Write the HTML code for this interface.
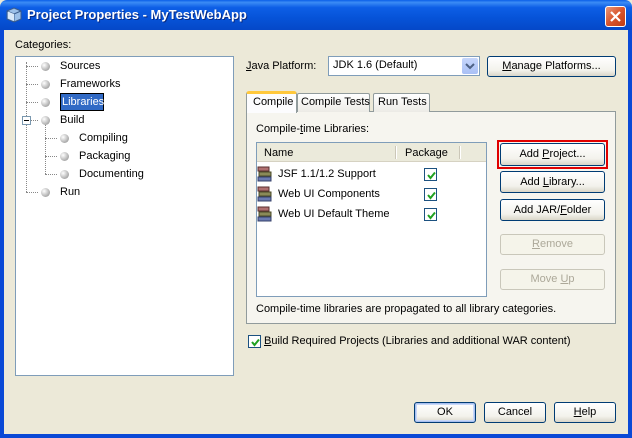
<!DOCTYPE html>
<html><head><meta charset="utf-8"><style>
*{box-sizing:border-box;margin:0;padding:0}
body{width:632px;height:438px;overflow:hidden;font-family:"Liberation Sans",Tahoma,sans-serif;font-size:11px;line-height:15px;color:#000;background:#ece9d8;position:relative}
.a{position:absolute;white-space:nowrap}
.title{left:0;top:0;width:632px;height:30px;background:linear-gradient(#0a5fe8 0%,#3b8cf5 8%,#0d5ee6 25%,#0653d8 60%,#0548c8 100%);border-radius:7px 7px 0 0}
.bl{background:#0a49d6}
.btn{position:absolute;border:1px solid #003c74;border-radius:3px;background:linear-gradient(#fff,#f3f2ec 70%,#d9d6c8);text-align:center;line-height:19px}
.btn.dis{border-color:#c9c7ba;color:#aca899;background:#f5f4ea}
u{text-decoration:underline}
.dot{position:absolute;width:9px;height:9px;border-radius:50%;background:radial-gradient(circle at 35% 35%,#fff,#aaa 70%,#888)}
.hl{border-top:1px dotted #888}
.vl{border-left:1px dotted #888}
.cb{position:absolute;width:13px;height:13px;border:1px solid #1c5180;background:#fff}
.cb svg{position:absolute;left:1px;top:1px}
.book{position:absolute;width:16px;height:16px}
</style></head><body>
<div class="a title"></div>
<div class="a" style="left:6px;top:7px;width:16px;height:16px">
<svg width="16" height="16"><path d="M8 1 L15 4 L15 12 L8 15 L1 12 L1 4Z" fill="#9cc0e8" stroke="#3a5c8c"/><path d="M1 4 L8 7 L15 4 M8 7 V15" stroke="#3a5c8c" fill="none"/><path d="M2 4.5 L8 7 L8 14 L2 11.5Z" fill="#d8e8f8"/></svg></div>
<div class="a" style="left:27px;top:7px;color:#fff;font-weight:bold;font-size:13px;text-shadow:1px 1px #0a2a80">Project Properties - MyTestWebApp</div>
<div class="a" style="left:605px;top:6px;width:21px;height:21px;border:1px solid #fff;border-radius:3px;background:linear-gradient(135deg,#e8987a,#d9542c 50%,#c03c12)">
<svg width="19" height="19"><path d="M5 5 L14 14 M14 5 L5 14" stroke="#fff" stroke-width="2.2"/></svg></div>
<div class="a bl" style="left:0;top:30px;width:4px;height:408px"></div>
<div class="a bl" style="left:628px;top:30px;width:4px;height:408px"></div>
<div class="a bl" style="left:0;top:434px;width:632px;height:4px"></div>

<div class="a" style="left:15px;top:38px">Categories:</div>
<div class="a" style="left:15px;top:56px;width:219px;height:320px;background:#fff;border:1px solid #7f9db9"></div>
<div class="a vl" style="left:26px;top:62px;height:130px"></div>
<div class="a hl" style="left:26px;top:66px;width:12px"></div>
<div class="a hl" style="left:26px;top:84px;width:12px"></div>
<div class="a hl" style="left:26px;top:102px;width:12px"></div>
<div class="a hl" style="left:26px;top:120px;width:12px"></div>
<div class="a hl" style="left:26px;top:192px;width:12px"></div>
<div class="a vl" style="left:45px;top:125px;height:49px"></div>
<div class="a hl" style="left:45px;top:138px;width:12px"></div>
<div class="a hl" style="left:45px;top:156px;width:12px"></div>
<div class="a hl" style="left:45px;top:174px;width:12px"></div>
<div class="a" style="left:22px;top:116px;width:9px;height:9px;border:1px solid #7a98af;background:#fff"><div style="position:absolute;left:1px;top:3px;width:5px;height:1px;background:#000"></div></div>
<div class="dot" style="left:41px;top:62px"></div>
<div class="dot" style="left:41px;top:80px"></div>
<div class="dot" style="left:41px;top:98px"></div>
<div class="dot" style="left:41px;top:116px"></div>
<div class="dot" style="left:60px;top:134px"></div>
<div class="dot" style="left:60px;top:152px"></div>
<div class="dot" style="left:60px;top:170px"></div>
<div class="dot" style="left:41px;top:188px"></div>
<div class="a" style="left:60px;top:59px">Sources</div>
<div class="a" style="left:60px;top:77px">Frameworks</div>
<div class="a" style="left:60px;top:93px;width:44px;height:18px;background:#316ac5;border:1px solid #000;color:#fff;padding:1px 0 0 1px">Libraries</div>
<div class="a" style="left:60px;top:113px">Build</div>
<div class="a" style="left:79px;top:131px">Compiling</div>
<div class="a" style="left:79px;top:149px">Packaging</div>
<div class="a" style="left:79px;top:167px">Documenting</div>
<div class="a" style="left:60px;top:185px">Run</div>

<div class="a" style="left:246px;top:59px"><u>J</u>ava Platform:</div>
<div class="a" style="left:328px;top:56px;width:152px;height:20px;background:#fff;border:1px solid #7f9db9;padding:1px 0 0 4px">JDK 1.6 (Default)</div>
<div class="a" style="left:462px;top:58px;width:16px;height:16px;border-radius:2px;background:linear-gradient(#c6d6fb,#a9c0f5)"><svg width="16" height="16"><path d="M4 6 L8 10 L12 6" stroke="#4d6185" stroke-width="2" fill="none"/></svg></div>
<div class="btn" style="left:487px;top:56px;width:129px;height:21px"><u>M</u>anage Platforms...</div>

<div class="a" style="left:246px;top:111px;width:370px;height:213px;border:1px solid #919b9c;background:#f6f5ef;"></div>
<div class="a" style="left:297px;top:93px;width:73px;height:19px;border:1px solid #919b9c;border-bottom:none;background:linear-gradient(#fff,#ecebe6);padding:1px 0 0 3px;border-radius:2px 2px 0 0">Compile Tests</div>
<div class="a" style="left:373px;top:93px;width:57px;height:19px;border:1px solid #919b9c;border-bottom:none;background:linear-gradient(#fff,#ecebe6);padding:1px 0 0 4px;border-radius:2px 2px 0 0">Run Tests</div>
<div class="a" style="left:246px;top:91px;width:51px;height:22px;border:1px solid #919b9c;border-top:3px solid #ffc83c;border-bottom:none;background:#fcfcfe;padding:1px 0 0 6px;border-radius:3px 3px 0 0">Compile</div>

<div class="a" style="left:256px;top:122px">Compile-<u>t</u>ime Libraries:</div>
<div class="a" style="left:256px;top:142px;width:231px;height:155px;border:1px solid #7f9db9;background:#fff"></div>
<div class="a" style="left:257px;top:143px;width:229px;height:19px;background:#ebeadb;border-bottom:1px solid #d6d2c2"></div>
<div class="a" style="left:395px;top:146px;width:2px;height:13px;border-left:1px solid #cbc7b8;border-right:1px solid #fff"></div>
<div class="a" style="left:459px;top:146px;width:2px;height:13px;border-left:1px solid #cbc7b8;border-right:1px solid #fff"></div>
<div class="a" style="left:264px;top:146px">Name</div>
<div class="a" style="left:405px;top:146px">Package</div>

<svg class="book" style="left:257px;top:166px" viewBox="0 0 16 16"><rect x="1" y="1" width="11" height="4" fill="#b07070" stroke="#5a3030"/><rect x="2" y="6" width="12" height="4" fill="#8a8a58" stroke="#4a4a28"/><rect x="1" y="11" width="13" height="4" fill="#6a7ab0" stroke="#34406a"/></svg>
<svg class="book" style="left:257px;top:186px" viewBox="0 0 16 16"><rect x="1" y="1" width="11" height="4" fill="#b07070" stroke="#5a3030"/><rect x="2" y="6" width="12" height="4" fill="#8a8a58" stroke="#4a4a28"/><rect x="1" y="11" width="13" height="4" fill="#6a7ab0" stroke="#34406a"/></svg>
<svg class="book" style="left:257px;top:206px" viewBox="0 0 16 16"><rect x="1" y="1" width="11" height="4" fill="#b07070" stroke="#5a3030"/><rect x="2" y="6" width="12" height="4" fill="#8a8a58" stroke="#4a4a28"/><rect x="1" y="11" width="13" height="4" fill="#6a7ab0" stroke="#34406a"/></svg>
<div class="a" style="left:278px;top:167px">JSF 1.1/1.2 Support</div>
<div class="a" style="left:278px;top:187px">Web UI Components</div>
<div class="a" style="left:278px;top:207px">Web UI Default Theme</div>
<div class="cb" style="left:424px;top:168px"><svg width="11" height="11"><path d="M2 5 L4.5 8 L9 2.5" stroke="#21a121" stroke-width="2" fill="none"/></svg></div>
<div class="cb" style="left:424px;top:188px"><svg width="11" height="11"><path d="M2 5 L4.5 8 L9 2.5" stroke="#21a121" stroke-width="2" fill="none"/></svg></div>
<div class="cb" style="left:424px;top:208px"><svg width="11" height="11"><path d="M2 5 L4.5 8 L9 2.5" stroke="#21a121" stroke-width="2" fill="none"/></svg></div>

<div class="a" style="left:497px;top:140px;width:111px;height:29px;border:2px solid #e00000"></div>
<div class="btn" style="left:500px;top:143px;width:105px;height:23px;line-height:21px">Add <u>P</u>roject...</div>
<div class="btn" style="left:500px;top:171px;width:105px;height:22px;line-height:20px">Add <u>L</u>ibrary...</div>
<div class="btn" style="left:500px;top:199px;width:105px;height:22px;line-height:20px">Add JAR/<u>F</u>older</div>
<div class="btn dis" style="left:500px;top:234px;width:105px;height:21px"><u>R</u>emove</div>
<div class="btn dis" style="left:500px;top:269px;width:105px;height:21px">Move <u>U</u>p</div>

<div class="a" style="left:256px;top:302px">Compile-time libraries are propagated to all library categories.</div>
<div class="cb" style="left:248px;top:335px"><svg width="11" height="11"><path d="M2 5 L4.5 8 L9 2.5" stroke="#21a121" stroke-width="2" fill="none"/></svg></div>
<div class="a" style="left:264px;top:334px"><u>B</u>uild Required Projects (Libraries and additional WAR content)</div>

<div class="btn" style="left:414px;top:402px;width:62px;height:21px;box-shadow:inset 0 0 0 1px #a8c0f0,inset 0 0 0 2px #c8d8f8">OK</div>
<div class="btn" style="left:484px;top:402px;width:62px;height:21px">Cancel</div>
<div class="btn" style="left:554px;top:402px;width:62px;height:21px"><u>H</u>elp</div>
</body></html>
